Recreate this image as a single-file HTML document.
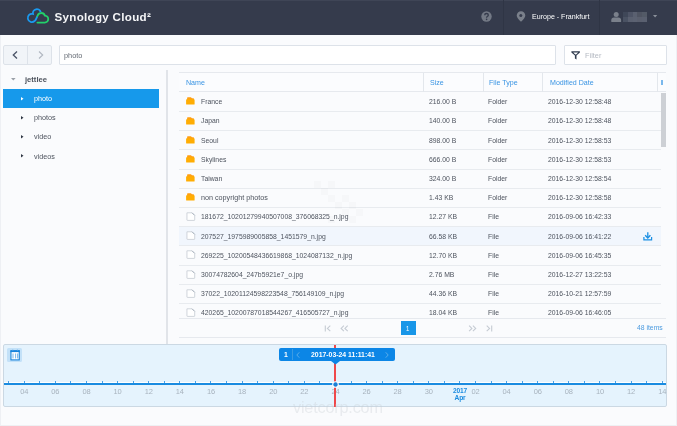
<!DOCTYPE html>
<html><head><meta charset="utf-8">
<style>
*{margin:0;padding:0;box-sizing:border-box}
html,body{width:677px;height:426px;overflow:hidden}
body{background:#fafbfd;font-family:"Liberation Sans",sans-serif;position:relative;color:#555b66}
.abs{position:absolute}
#root{position:absolute;left:0;top:0;width:677px;height:426px;will-change:transform}
#hdr{left:0;top:0;width:677px;height:35px;background:#353b4c}
.brand{left:54.5px;top:10px;color:#f4f5f7;font-size:11.6px;font-weight:bold;letter-spacing:0.3px;white-space:nowrap;line-height:14px}
.hsep{top:0;width:1px;height:35px;background:#2f3545}
.loc{left:531.5px;top:12px;color:#fff;font-size:8px;white-space:nowrap;line-height:9px;transform:scaleX(.885);transform-origin:0 0}
.navbox{left:3px;top:45px;width:49px;height:20px;border:1px solid #dde2e9;background:#f1f4f8;border-radius:2px}
.navsep{left:26.8px;top:45px;width:1px;height:20px;background:#dde2e9}
.inp{top:45px;height:20px;background:#fff;border:1px solid #dde2e9;border-radius:1px}
.ptxt{font-size:8px;color:#666c75;white-space:nowrap;line-height:9px;transform:scaleX(.92);transform-origin:0 0}
.tree{font-size:8px;white-space:nowrap;color:#4d535e;line-height:9px;transform:scaleX(.90);transform-origin:0 0}
.sel{left:3px;top:89px;width:156px;height:19px;background:#1699eb}
.vline{left:166.3px;top:70px;width:1.5px;height:274px;background:#e1e4e9}
.th{top:72px;left:179px;width:487px;height:20.4px;border-top:1px solid #e6e9ee;border-bottom:1px solid #e6e9ee;background:#fbfcfe}
.thtxt{top:78px;font-size:8px;color:#3994e3;white-space:nowrap;line-height:9px;transform:scaleX(.885);transform-origin:0 0}
.cdiv{top:73px;width:1px;height:19px;background:#e3e7ec}
.row{left:179px;width:482px;height:1px;background:#e8ebef}
.hl{left:179px;width:482px;height:19px;background:#f1f6fd}
.cell{font-size:8px;color:#4d535e;white-space:nowrap;line-height:9px;transform:scaleX(.852);transform-origin:0 0}
.scroll{left:661.4px;top:92.5px;width:4.4px;height:54.5px;background:#cdd0d5}
.pline{left:179px;width:487px;height:1px;background:#e6e9ee}
.tl{left:3px;top:344px;width:664px;height:63px;background:#e5f3fd;border:1px solid #cbd8e3;border-radius:2px}
.axis{left:4px;top:383px;width:662px;height:2px;background:#1a8be0}
.tick{top:380.8px;width:1px;height:2.5px;background:#4aa0e6}
.tlab{top:387.5px;width:40px;text-align:center;font-size:7.5px;color:#a8b3be;letter-spacing:-0.2px;line-height:8px}
.yr{color:#1a8be0;font-weight:bold;line-height:7px;top:387px;transform:scaleX(.88)}
.bub{left:278.6px;top:347.6px;width:116.3px;height:13.5px;background:#0c86e6;border-radius:2px}
.btxt{color:#fff;font-weight:bold;font-size:8px;white-space:nowrap;line-height:9px;transform:scaleX(.86);transform-origin:0 0}
.wm{left:293px;top:398px;font-size:17px;color:rgba(200,205,212,0.35);white-space:nowrap;letter-spacing:-0.2px;transform:scaleX(.955);transform-origin:0 0}

</style></head><body>
<div id="root">
<div id="hdr" class="abs"></div>
<div class="abs" style="left:0;top:0;width:677px;height:1px;background:#3f4556"></div>
<svg class="abs" style="left:24px;top:5px" width="30" height="22" viewBox="0 0 30 22">
  <path d="M16.7 7.3 A3.8 3.8 0 0 0 9.0 9.0 A4.1 4.1 0 1 0 10.6 16.0 C12.2 15.2 12.4 12.6 13.4 11.2" fill="none" stroke="#1a9af0" stroke-width="1.8"/>
  <path d="M13.4 11.2 A3.9 3.9 0 0 1 20.9 10.6 A3.5 3.5 0 0 1 20.6 17.6 H13.4" fill="none" stroke="#22d06a" stroke-width="1.8" stroke-linecap="round"/>
</svg>
<div class="abs brand">Synology Cloud²</div>
<svg class="abs" style="left:481.2px;top:11px" width="11" height="11" viewBox="0 0 11 11"><circle cx="5.5" cy="5.5" r="5.2" fill="#737985"/><path d="M3.7 4.2 Q3.7 2.5 5.5 2.5 Q7.3 2.5 7.3 4.1 Q7.3 5 6.3 5.5 Q5.6 5.9 5.6 6.7" fill="none" stroke="#353b4c" stroke-width="1.35"/><circle cx="5.6" cy="8.4" r="0.8" fill="#353b4c"/></svg>
<div class="abs hsep" style="left:502.5px"></div>
<svg class="abs" style="left:516px;top:10.9px" width="10" height="11" viewBox="0 0 10 11"><path d="M5 0.3 A4.3 4.3 0 0 1 9.3 4.6 Q9.3 7 5 10.8 Q0.7 7 0.7 4.6 A4.3 4.3 0 0 1 5 0.3 Z" fill="#7a808b"/><circle cx="4.8" cy="4.6" r="1.5" fill="#353b4c"/></svg>
<div class="abs loc">Europe - Frankfurt</div>
<div class="abs hsep" style="left:599px"></div>
<svg class="abs" style="left:611px;top:12px" width="11" height="10" viewBox="0 0 11 10"><circle cx="5.2" cy="2.6" r="2.5" fill="#7a808b"/><path d="M0.3 10 V8.2 Q0.3 5.8 3 5.6 H7.4 Q10.1 5.8 10.1 8.2 V10 Z" fill="#7a808b"/></svg>
<div class="abs" style="left:623px;top:12px;width:24px;height:10px;display:grid;grid-template-columns:repeat(5,1fr);grid-template-rows:1fr 1fr">
<div style="background:#3f4758"></div><div style="background:#4e5466"></div><div style="background:#5a6070"></div><div style="background:#4f5462"></div><div style="background:#535a67"></div>
<div style="background:#4a5263"></div><div style="background:#5a6070"></div><div style="background:#5c6272"></div><div style="background:#5a5f6e"></div><div style="background:#5a6070"></div>
</div>
<svg class="abs" style="left:652.8px;top:15.4px" width="5" height="3" viewBox="0 0 5 3"><path d="M0 0 H4.2 L2.1 2.5 Z" fill="#8a909a"/></svg>

<div class="abs" style="left:0;top:35px;width:1px;height:391px;background:#eef0f4"></div>
<div class="abs" style="left:676px;top:35px;width:1px;height:391px;background:#eef0f4"></div>

<div class="abs navbox"></div>
<div class="abs navsep"></div>
<svg class="abs" style="left:12px;top:50.5px" width="6" height="8" viewBox="0 0 6 8"><path d="M5 0.5 L1.3 4 L5 7.5" fill="none" stroke="#4a5366" stroke-width="1.3"/></svg>
<svg class="abs" style="left:37.5px;top:50.5px" width="6" height="8" viewBox="0 0 6 8"><path d="M1 0.5 L4.7 4 L1 7.5" fill="none" stroke="#b0b6c0" stroke-width="1.1"/></svg>
<div class="abs inp" style="left:58.5px;width:497.5px"></div>
<div class="abs ptxt" style="left:63.5px;top:50.5px">photo</div>
<div class="abs inp" style="left:564px;width:103px"></div>
<svg class="abs" style="left:571px;top:50.8px" width="10" height="9" viewBox="0 0 10 9"><path d="M0.4 0.3 H8.9 V1.5 L5.5 4.6 V8.4 L3.9 7.6 V4.6 L0.4 1.5 Z M2.2 1.5 L4.3 3.6 H5.1 L7.1 1.5 Z" fill="#2f3a4d" fill-rule="evenodd"/></svg>
<div class="abs ptxt" style="left:585px;top:50.5px;color:#b4b9c2">Filter</div>

<svg class="abs" style="left:11px;top:77.8px" width="5" height="3" viewBox="0 0 5 3"><path d="M0 0 H4.6 L2.3 2.6 Z" fill="#9aa0a8"/></svg>
<div class="abs tree" style="left:24.8px;top:74.6px;font-weight:bold;color:#4d535d;transform:scaleX(.95)">jettlee</div>
<div class="abs sel"></div>
<svg class="abs" style="left:20.6px;top:97.2px" width="3" height="4" viewBox="0 0 3 4"><path d="M0 0 L2.5 1.8 L0 3.6 Z" fill="#fff"/></svg>
<div class="abs tree" style="left:34px;top:94.2px;color:#fff">photo</div>
<svg class="abs" style="left:20.6px;top:116.2px" width="3" height="4" viewBox="0 0 3 4"><path d="M0 0 L2.5 1.8 L0 3.6 Z" fill="#303744"/></svg>
<div class="abs tree" style="left:34px;top:113.3px">photos</div>
<svg class="abs" style="left:20.6px;top:135.2px" width="3" height="4" viewBox="0 0 3 4"><path d="M0 0 L2.5 1.8 L0 3.6 Z" fill="#303744"/></svg>
<div class="abs tree" style="left:34px;top:132.4px">video</div>
<svg class="abs" style="left:20.6px;top:154.2px" width="3" height="4" viewBox="0 0 3 4"><path d="M0 0 L2.5 1.8 L0 3.6 Z" fill="#303744"/></svg>
<div class="abs tree" style="left:34px;top:151.5px">videos</div>
<div class="abs vline"></div>

<div class="abs th"></div>
<div class="abs cdiv" style="left:423px"></div>
<div class="abs cdiv" style="left:483px"></div>
<div class="abs cdiv" style="left:542px"></div>
<div class="abs cdiv" style="left:657px"></div>
<div class="abs thtxt" style="left:186px">Name</div>
<div class="abs thtxt" style="left:430px">Size</div>
<div class="abs thtxt" style="left:489px">File Type</div>
<div class="abs thtxt" style="left:549.5px">Modified Date</div>
<div class="abs" style="left:661px;top:80px;width:1.5px;height:5px;background:#7ab8ec"></div>
<svg class="abs" style="left:185.8px;top:97.4px" width="9" height="9" viewBox="0 0 9 9"><path d="M1.1 0.9 Q1.1 0.2 1.8 0.2 H4.9 L6 1.2 H7.3 Q8 1.2 8 1.9 V3.5 H1.1 Z" fill="#ff9f12"/><rect x="0.1" y="2.35" width="8.5" height="5.2" rx="0.6" fill="#ffad03"/></svg>
<div class="abs cell" style="left:200.5px;top:97.1px;transform:scaleX(.85)">France</div>
<div class="abs cell" style="left:428.5px;top:97.1px">216.00 B</div>
<div class="abs cell" style="left:488.3px;top:97.1px">Folder</div>
<div class="abs cell" style="left:548px;top:97.1px">2016-12-30 12:58:48</div>
<div class="abs row" style="top:111.0px"></div>
<svg class="abs" style="left:185.8px;top:116.6px" width="9" height="9" viewBox="0 0 9 9"><path d="M1.1 0.9 Q1.1 0.2 1.8 0.2 H4.9 L6 1.2 H7.3 Q8 1.2 8 1.9 V3.5 H1.1 Z" fill="#ff9f12"/><rect x="0.1" y="2.35" width="8.5" height="5.2" rx="0.6" fill="#ffad03"/></svg>
<div class="abs cell" style="left:200.5px;top:116.3px;transform:scaleX(.85)">Japan</div>
<div class="abs cell" style="left:428.5px;top:116.3px">140.00 B</div>
<div class="abs cell" style="left:488.3px;top:116.3px">Folder</div>
<div class="abs cell" style="left:548px;top:116.3px">2016-12-30 12:58:48</div>
<div class="abs row" style="top:130.2px"></div>
<svg class="abs" style="left:185.8px;top:135.8px" width="9" height="9" viewBox="0 0 9 9"><path d="M1.1 0.9 Q1.1 0.2 1.8 0.2 H4.9 L6 1.2 H7.3 Q8 1.2 8 1.9 V3.5 H1.1 Z" fill="#ff9f12"/><rect x="0.1" y="2.35" width="8.5" height="5.2" rx="0.6" fill="#ffad03"/></svg>
<div class="abs cell" style="left:200.5px;top:135.5px;transform:scaleX(.85)">Seoul</div>
<div class="abs cell" style="left:428.5px;top:135.5px">898.00 B</div>
<div class="abs cell" style="left:488.3px;top:135.5px">Folder</div>
<div class="abs cell" style="left:548px;top:135.5px">2016-12-30 12:58:53</div>
<div class="abs row" style="top:149.4px"></div>
<svg class="abs" style="left:185.8px;top:155.0px" width="9" height="9" viewBox="0 0 9 9"><path d="M1.1 0.9 Q1.1 0.2 1.8 0.2 H4.9 L6 1.2 H7.3 Q8 1.2 8 1.9 V3.5 H1.1 Z" fill="#ff9f12"/><rect x="0.1" y="2.35" width="8.5" height="5.2" rx="0.6" fill="#ffad03"/></svg>
<div class="abs cell" style="left:200.5px;top:154.7px;transform:scaleX(.85)">Skylines</div>
<div class="abs cell" style="left:428.5px;top:154.7px">666.00 B</div>
<div class="abs cell" style="left:488.3px;top:154.7px">Folder</div>
<div class="abs cell" style="left:548px;top:154.7px">2016-12-30 12:58:53</div>
<div class="abs row" style="top:168.6px"></div>
<svg class="abs" style="left:185.8px;top:174.2px" width="9" height="9" viewBox="0 0 9 9"><path d="M1.1 0.9 Q1.1 0.2 1.8 0.2 H4.9 L6 1.2 H7.3 Q8 1.2 8 1.9 V3.5 H1.1 Z" fill="#ff9f12"/><rect x="0.1" y="2.35" width="8.5" height="5.2" rx="0.6" fill="#ffad03"/></svg>
<div class="abs cell" style="left:200.5px;top:173.9px;transform:scaleX(.85)">Taiwan</div>
<div class="abs cell" style="left:428.5px;top:173.9px">324.00 B</div>
<div class="abs cell" style="left:488.3px;top:173.9px">Folder</div>
<div class="abs cell" style="left:548px;top:173.9px">2016-12-30 12:58:54</div>
<div class="abs row" style="top:187.8px"></div>
<svg class="abs" style="left:185.8px;top:193.4px" width="9" height="9" viewBox="0 0 9 9"><path d="M1.1 0.9 Q1.1 0.2 1.8 0.2 H4.9 L6 1.2 H7.3 Q8 1.2 8 1.9 V3.5 H1.1 Z" fill="#ff9f12"/><rect x="0.1" y="2.35" width="8.5" height="5.2" rx="0.6" fill="#ffad03"/></svg>
<div class="abs cell" style="left:200.5px;top:193.1px;transform:scaleX(.90)">non copyright photos</div>
<div class="abs cell" style="left:428.5px;top:193.1px">1.43 KB</div>
<div class="abs cell" style="left:488.3px;top:193.1px">Folder</div>
<div class="abs cell" style="left:548px;top:193.1px">2016-12-30 12:58:58</div>
<div class="abs row" style="top:207.0px"></div>
<svg class="abs" style="left:186px;top:211.9px" width="10" height="10" viewBox="0 0 10 10"><path d="M0.95 0.8 H6.1 L8.7 3.4 V8.0 Q8.7 8.4 8.3 8.4 H1.35 Q0.95 8.4 0.95 8.0 Z" fill="#fff" stroke="#c8cdd4" stroke-width="0.85"/><path d="M6.1 0.8 L8.7 3.4" stroke="#a3acb7" stroke-width="0.9"/></svg>
<div class="abs cell" style="left:200.5px;top:212.3px;">181672_10201279940507008_376068325_n.jpg</div>
<div class="abs cell" style="left:428.5px;top:212.3px">12.27 KB</div>
<div class="abs cell" style="left:488.3px;top:212.3px">File</div>
<div class="abs cell" style="left:548px;top:212.3px">2016-09-06 16:42:33</div>
<div class="abs row" style="top:226.2px"></div>
<div class="abs hl" style="top:226.7px"></div>
<svg class="abs" style="left:186px;top:231.1px" width="10" height="10" viewBox="0 0 10 10"><path d="M0.95 0.8 H6.1 L8.7 3.4 V8.0 Q8.7 8.4 8.3 8.4 H1.35 Q0.95 8.4 0.95 8.0 Z" fill="#fff" stroke="#c8cdd4" stroke-width="0.85"/><path d="M6.1 0.8 L8.7 3.4" stroke="#a3acb7" stroke-width="0.9"/></svg>
<div class="abs cell" style="left:200.5px;top:231.5px;">207527_1975989005858_1451579_n.jpg</div>
<div class="abs cell" style="left:428.5px;top:231.5px">66.58 KB</div>
<div class="abs cell" style="left:488.3px;top:231.5px">File</div>
<div class="abs cell" style="left:548px;top:231.5px">2016-09-06 16:41:22</div>
<div class="abs row" style="top:245.4px"></div>
<svg class="abs" style="left:186px;top:250.3px" width="10" height="10" viewBox="0 0 10 10"><path d="M0.95 0.8 H6.1 L8.7 3.4 V8.0 Q8.7 8.4 8.3 8.4 H1.35 Q0.95 8.4 0.95 8.0 Z" fill="#fff" stroke="#c8cdd4" stroke-width="0.85"/><path d="M6.1 0.8 L8.7 3.4" stroke="#a3acb7" stroke-width="0.9"/></svg>
<div class="abs cell" style="left:200.5px;top:250.7px;">269225_10200548436619868_1024087132_n.jpg</div>
<div class="abs cell" style="left:428.5px;top:250.7px">12.70 KB</div>
<div class="abs cell" style="left:488.3px;top:250.7px">File</div>
<div class="abs cell" style="left:548px;top:250.7px">2016-09-06 16:45:35</div>
<div class="abs row" style="top:264.6px"></div>
<svg class="abs" style="left:186px;top:269.5px" width="10" height="10" viewBox="0 0 10 10"><path d="M0.95 0.8 H6.1 L8.7 3.4 V8.0 Q8.7 8.4 8.3 8.4 H1.35 Q0.95 8.4 0.95 8.0 Z" fill="#fff" stroke="#c8cdd4" stroke-width="0.85"/><path d="M6.1 0.8 L8.7 3.4" stroke="#a3acb7" stroke-width="0.9"/></svg>
<div class="abs cell" style="left:200.5px;top:269.9px;">30074782604_247b5921e7_o.jpg</div>
<div class="abs cell" style="left:428.5px;top:269.9px">2.76 MB</div>
<div class="abs cell" style="left:488.3px;top:269.9px">File</div>
<div class="abs cell" style="left:548px;top:269.9px">2016-12-27 13:22:53</div>
<div class="abs row" style="top:283.8px"></div>
<svg class="abs" style="left:186px;top:288.7px" width="10" height="10" viewBox="0 0 10 10"><path d="M0.95 0.8 H6.1 L8.7 3.4 V8.0 Q8.7 8.4 8.3 8.4 H1.35 Q0.95 8.4 0.95 8.0 Z" fill="#fff" stroke="#c8cdd4" stroke-width="0.85"/><path d="M6.1 0.8 L8.7 3.4" stroke="#a3acb7" stroke-width="0.9"/></svg>
<div class="abs cell" style="left:200.5px;top:289.1px;">37022_10201124598223548_756149109_n.jpg</div>
<div class="abs cell" style="left:428.5px;top:289.1px">44.36 KB</div>
<div class="abs cell" style="left:488.3px;top:289.1px">File</div>
<div class="abs cell" style="left:548px;top:289.1px">2016-10-21 12:57:59</div>
<div class="abs row" style="top:303.0px"></div>
<svg class="abs" style="left:186px;top:307.9px" width="10" height="10" viewBox="0 0 10 10"><path d="M0.95 0.8 H6.1 L8.7 3.4 V8.0 Q8.7 8.4 8.3 8.4 H1.35 Q0.95 8.4 0.95 8.0 Z" fill="#fff" stroke="#c8cdd4" stroke-width="0.85"/><path d="M6.1 0.8 L8.7 3.4" stroke="#a3acb7" stroke-width="0.9"/></svg>
<div class="abs cell" style="left:200.5px;top:308.3px;">420265_10200787018544267_416505727_n.jpg</div>
<div class="abs cell" style="left:428.5px;top:308.3px">18.04 KB</div>
<div class="abs cell" style="left:488.3px;top:308.3px">File</div>
<div class="abs cell" style="left:548px;top:308.3px">2016-09-06 16:46:05</div>
<svg class="abs" style="left:642.5px;top:231.5px" width="10" height="9" viewBox="0 0 10 9"><path d="M4.8 0.3 V5.4" stroke="#1a8fe3" stroke-width="1.3"/><path d="M2.2 3.2 L4.8 5.9 L7.4 3.2" fill="none" stroke="#1a8fe3" stroke-width="1.4"/><path d="M0.9 4.9 V7.9 H8.6 V4.9" fill="none" stroke="#1a8fe3" stroke-width="1.2"/></svg>
<div class="abs scroll"></div>
<div class="abs" style="left:179px;top:317px;width:487px;height:20px;background:#fafbfd"></div>
<div class="abs pline" style="top:318px"></div>
<div class="abs pline" style="top:337px"></div>
<svg class="abs" style="left:324px;top:324.5px" width="8" height="7" viewBox="0 0 8 7"><path d="M1.3 0.4 V6.4 M6.3 0.6 L3.4 3.4 L6.3 6.2" fill="none" stroke="#c5cbd3" stroke-width="1.1"/></svg>
<svg class="abs" style="left:340px;top:324.5px" width="9" height="7" viewBox="0 0 9 7"><path d="M3.9 0.6 L1.1 3.4 L3.9 6.2 M7.7 0.6 L4.9 3.4 L7.7 6.2" fill="none" stroke="#c5cbd3" stroke-width="1.1"/></svg>
<div class="abs" style="left:401px;top:321px;width:14.5px;height:14px;background:#1896e8"></div>
<div class="abs btxt" style="left:406px;top:323.5px;font-weight:normal;font-size:7px">1</div>
<svg class="abs" style="left:468px;top:324.5px" width="9" height="7" viewBox="0 0 9 7"><path d="M1.1 0.6 L3.9 3.4 L1.1 6.2 M4.9 0.6 L7.7 3.4 L4.9 6.2" fill="none" stroke="#c5cbd3" stroke-width="1.1"/></svg>
<svg class="abs" style="left:485px;top:324.5px" width="8" height="7" viewBox="0 0 8 7"><path d="M6.7 0.4 V6.4 M1.7 0.6 L4.6 3.4 L1.7 6.2" fill="none" stroke="#c5cbd3" stroke-width="1.1"/></svg>
<div class="abs cell" style="left:637px;top:323px;color:#4c9be0;transform:scaleX(.85)">48 items</div>

<div class="abs tl"></div>
<div class="abs" style="left:7px;top:348px;width:15px;height:14px;background:#c3e1f8;border-radius:1.5px"></div>
<svg class="abs" style="left:9.5px;top:349px" width="10" height="12" viewBox="0 0 10 12"><rect x="0.95" y="2" width="8.3" height="8.9" fill="#fff" stroke="#1783dc" stroke-width="1.1"/><rect x="0.4" y="1.2" width="9.4" height="1.9" fill="#1783dc"/><path d="M2.8 0.5 V1.6 M7.4 0.5 V1.6" stroke="#6db2ea" stroke-width="0.9"/><path d="M3 4.5 V9.4 M5.6 4.5 V9.4 M7.6 4.5 V9.4" stroke="#3d98e2" stroke-width="0.7"/></svg>
<div class="abs" style="left:4px;top:382px;width:662px;height:1px;background:#fff"></div>
<div class="abs axis"></div>
<div class="abs tick" style="left:8.1px"></div>
<div class="abs tick" style="left:23.7px"></div>
<div class="abs tlab" style="left:4.2px">04</div>
<div class="abs tick" style="left:39.3px"></div>
<div class="abs tick" style="left:54.8px"></div>
<div class="abs tlab" style="left:35.3px">06</div>
<div class="abs tick" style="left:70.4px"></div>
<div class="abs tick" style="left:85.9px"></div>
<div class="abs tlab" style="left:66.4px">08</div>
<div class="abs tick" style="left:101.5px"></div>
<div class="abs tick" style="left:117.1px"></div>
<div class="abs tlab" style="left:97.6px">10</div>
<div class="abs tick" style="left:132.6px"></div>
<div class="abs tick" style="left:148.2px"></div>
<div class="abs tlab" style="left:128.7px">12</div>
<div class="abs tick" style="left:163.7px"></div>
<div class="abs tick" style="left:179.3px"></div>
<div class="abs tlab" style="left:159.8px">14</div>
<div class="abs tick" style="left:194.9px"></div>
<div class="abs tick" style="left:210.4px"></div>
<div class="abs tlab" style="left:190.9px">16</div>
<div class="abs tick" style="left:226.0px"></div>
<div class="abs tick" style="left:241.5px"></div>
<div class="abs tlab" style="left:222.0px">18</div>
<div class="abs tick" style="left:257.1px"></div>
<div class="abs tick" style="left:272.7px"></div>
<div class="abs tlab" style="left:253.2px">20</div>
<div class="abs tick" style="left:288.2px"></div>
<div class="abs tick" style="left:303.8px"></div>
<div class="abs tlab" style="left:284.3px">22</div>
<div class="abs tick" style="left:319.3px"></div>
<div class="abs tick" style="left:334.9px"></div>
<div class="abs tlab" style="left:315.4px">24</div>
<div class="abs tick" style="left:350.5px"></div>
<div class="abs tick" style="left:366.0px"></div>
<div class="abs tlab" style="left:346.5px">26</div>
<div class="abs tick" style="left:381.6px"></div>
<div class="abs tick" style="left:397.1px"></div>
<div class="abs tlab" style="left:377.6px">28</div>
<div class="abs tick" style="left:412.7px"></div>
<div class="abs tick" style="left:428.3px"></div>
<div class="abs tlab" style="left:408.8px">30</div>
<div class="abs tick" style="left:443.8px"></div>
<div class="abs tick" style="left:459.4px"></div>
<div class="abs tlab yr" style="left:439.9px">2017<br>Apr</div>
<div class="abs tick" style="left:474.9px"></div>
<div class="abs tlab" style="left:455.4px">02</div>
<div class="abs tick" style="left:490.5px"></div>
<div class="abs tick" style="left:506.1px"></div>
<div class="abs tlab" style="left:486.6px">04</div>
<div class="abs tick" style="left:521.6px"></div>
<div class="abs tick" style="left:537.2px"></div>
<div class="abs tlab" style="left:517.7px">06</div>
<div class="abs tick" style="left:552.7px"></div>
<div class="abs tick" style="left:568.3px"></div>
<div class="abs tlab" style="left:548.8px">08</div>
<div class="abs tick" style="left:583.9px"></div>
<div class="abs tick" style="left:599.4px"></div>
<div class="abs tlab" style="left:579.9px">10</div>
<div class="abs tick" style="left:615.0px"></div>
<div class="abs tick" style="left:630.5px"></div>
<div class="abs tlab" style="left:611.0px">12</div>
<div class="abs tick" style="left:646.1px"></div>
<div class="abs tick" style="left:661.7px"></div>
<div class="abs tlab" style="left:642.2px">14</div>
<div class="abs" style="left:334px;top:344.5px;width:2px;height:62.5px;background:#ef484a"></div>
<div class="abs bub"></div>
<svg class="abs" style="left:330.5px;top:360.5px" width="9" height="4" viewBox="0 0 9 4"><path d="M0 0 H9 L4.5 3.5 Z" fill="#0c86e6"/></svg>
<div class="abs btxt" style="left:283.9px;top:349.8px">1</div>
<div class="abs" style="left:292.2px;top:349px;width:1px;height:11px;background:#3a9be3"></div>
<svg class="abs" style="left:296.3px;top:351.6px" width="4" height="6" viewBox="0 0 4 6"><path d="M3.3 0.3 L0.8 3 L3.3 5.7" fill="none" stroke="#6fb6ea" stroke-width="0.8"/></svg>
<div class="abs btxt" style="left:311px;top:349.8px">2017-03-24 11:11:41</div>
<svg class="abs" style="left:384.5px;top:351.6px" width="4" height="6" viewBox="0 0 4 6"><path d="M0.7 0.3 L3.2 3 L0.7 5.7" fill="none" stroke="#6fb6ea" stroke-width="0.8"/></svg>
<svg class="abs" style="left:331.5px;top:380.5px" width="7" height="7" viewBox="0 0 7 7"><circle cx="3.5" cy="3.5" r="2.8" fill="#1a7fd6" stroke="#fff" stroke-width="1.1"/></svg>
<div class="abs wm">vietcorp.com</div>
<div class="abs" style="left:314px;top:180.5px;width:7px;height:7px;background:rgba(40,50,70,0.02)"></div><div class="abs" style="left:327.5px;top:180.5px;width:7px;height:7px;background:rgba(40,50,70,0.02)"></div><div class="abs" style="left:321px;top:187.6px;width:7px;height:7px;background:rgba(40,50,70,0.02)"></div><div class="abs" style="left:327.5px;top:194.6px;width:7px;height:7px;background:rgba(40,50,70,0.02)"></div><div class="abs" style="left:341.5px;top:194.6px;width:7px;height:7px;background:rgba(40,50,70,0.02)"></div><div class="abs" style="left:334.5px;top:201.7px;width:7px;height:7px;background:rgba(40,50,70,0.02)"></div><div class="abs" style="left:348.6px;top:201.7px;width:7px;height:7px;background:rgba(40,50,70,0.02)"></div><div class="abs" style="left:355.6px;top:208.7px;width:7px;height:7px;background:rgba(40,50,70,0.02)"></div><div class="abs" style="left:341.5px;top:208.7px;width:7px;height:7px;background:rgba(40,50,70,0.02)"></div><div class="abs" style="left:327.5px;top:215.7px;width:7px;height:7px;background:rgba(40,50,70,0.02)"></div><div class="abs" style="left:348.6px;top:215.7px;width:7px;height:7px;background:rgba(40,50,70,0.02)"></div>

<div class="abs" style="left:0;top:425px;width:677px;height:1px;background:#eef0f3"></div>
</div>
</body></html>
